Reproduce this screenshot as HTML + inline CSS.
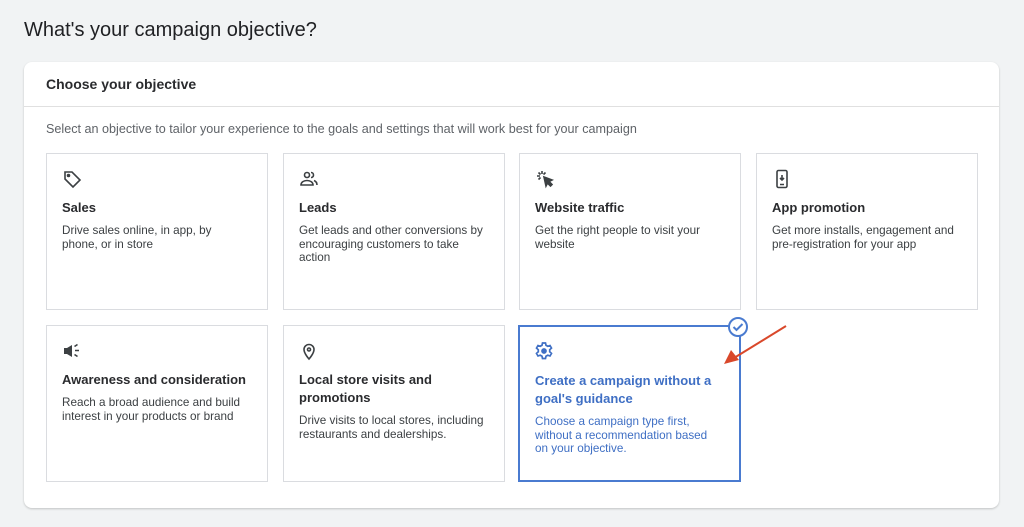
<!DOCTYPE html>
<html><head><style>
body{margin:0;width:1024px;height:527px;background:#f1f3f4;font-family:"Liberation Sans",sans-serif;position:relative;overflow:hidden}
h1{position:absolute;left:24px;top:19px;margin:0;font-size:20px;font-weight:400;color:#202124}
.card{position:absolute;left:24px;top:62px;width:975px;height:446px;background:#fff;border-radius:8px;box-shadow:0 1px 2px rgba(0,0,0,.2)}
.hd{position:absolute;left:22px;top:14px;font-size:14px;font-weight:bold;color:#2a2b2e}
.div{position:absolute;left:0;right:0;top:44px;border-top:1px solid #e0e0e0}
.sub{position:absolute;left:22px;top:60px;font-size:12.6px;color:#5f6368}
.t{position:absolute;width:222px;height:157px;border:1px solid #dadce0;box-sizing:border-box;background:#fff}
.t svg{position:absolute;left:15px;top:15px}
.t .ti{position:absolute;left:15px;top:45px;width:195px;font-size:13px;font-weight:bold;color:#2a2b2e;line-height:18px}
.t .d{position:absolute;left:15px;width:188px;font-size:11.7px;color:#3c4043;line-height:13.5px}
.sel{border:2px solid #4a7bd0}
.sel .ti,.sel .d{color:#3f6fc4}
.sel svg{left:14px;top:14px}
</style></head><body>
<h1>What's your campaign objective?</h1>
<div class="card">
<div class="hd">Choose your objective</div><div class="div"></div>
<div class="sub">Select an objective to tailor your experience to the goals and settings that will work best for your campaign</div>
</div>
<div class="t" style="left:46px;top:153px"><svg width="20" height="20" viewBox="0 0 20 20" fill="none" stroke="#3c4043" stroke-width="1.6"><path d="M3 3h7l8 8-7 7-8-8z"/><circle cx="6.5" cy="6.5" r="1" fill="#3c4043"/></svg><div class="ti">Sales</div><div class="d" style="top:70px">Drive sales online, in app, by phone, or in store</div></div>
<div class="t" style="left:283px;top:153px"><svg width="20" height="20" viewBox="0 0 20 20" fill="none" stroke="#3c4043" stroke-width="1.6"><circle cx="8" cy="6" r="2.5"/><path d="M2 16c0-3 3-4.5 6-4.5s6 1.5 6 4.5z"/><path d="M12 3.5a2.5 2.5 0 010 5M15 11.5c2 .8 3 2 3 4.5"/></svg><div class="ti">Leads</div><div class="d" style="top:70px">Get leads and other conversions by encouraging customers to take action</div></div>
<div class="t" style="left:519px;top:153px"><svg width="20" height="20" viewBox="0 0 20 20" fill="none" stroke="#3c4043" stroke-width="1.6"><path d="M9 8l8 3-3 1.5 3 3-1.5 1.5-3-3L11 17z" fill="#3c4043"/><path d="M7 2v3M2 7h3M3.5 3.5l2 2M10.5 3.5l-2 2M3.5 10.5l2-2"/></svg><div class="ti">Website traffic</div><div class="d" style="top:70px">Get the right people to visit your website</div></div>
<div class="t" style="left:756px;top:153px"><svg width="20" height="20" viewBox="0 0 20 20" fill="none" stroke="#3c4043" stroke-width="1.6"><rect x="5" y="1.5" width="10" height="17" rx="1.5"/><path d="M10 6v5M8 9l2 2 2-2M8 15.5h4"/></svg><div class="ti">App promotion</div><div class="d" style="top:70px">Get more installs, engagement and pre-registration for your app</div></div>
<div class="t" style="left:46px;top:325px"><svg width="20" height="20" viewBox="0 0 20 20" fill="#3c4043"><path d="M2 7h3l5-3v12l-5-3H2z"/><path d="M13 9.5h4M12.5 5.5l3-2M12.5 13.5l3 2" stroke="#3c4043" stroke-width="1.6"/></svg><div class="ti">Awareness and consideration</div><div class="d" style="top:70px">Reach a broad audience and build interest in your products or brand</div></div>
<div class="t" style="left:283px;top:325px"><svg width="20" height="20" viewBox="0 0 20 20" fill="none" stroke="#3c4043" stroke-width="1.6"><path d="M10 18s-5-5.5-5-9.5a5 5 0 0110 0c0 4-5 9.5-5 9.5z"/><circle cx="10" cy="8.5" r="1.5"/></svg><div class="ti">Local store visits and promotions</div><div class="d" style="top:88px">Drive visits to local stores, including restaurants and dealerships.</div></div>
<div class="t sel" style="left:518px;top:325px;width:223px;height:157px"><svg width="20" height="20" viewBox="0 0 20 20" fill="none" stroke="#3f6fc4" stroke-width="1.7"><path d="M8.5 2h3l.5 2.3 1.8 1 2.2-.8 1.5 2.6-1.8 1.6v2.1l1.8 1.6-1.5 2.6-2.2-.8-1.8 1-.5 2.3h-3l-.5-2.3-1.8-1-2.2.8-1.5-2.6 1.8-1.6V8.7L2.5 7.1 4 4.5l2.2.8 1.8-1z"/><circle cx="10" cy="10" r="2" fill="#3f6fc4"/></svg><div class="ti" style="color:#3f6fc4">Create a campaign without a goal's guidance</div><div class="d" style="top:88px">Choose a campaign type first, without a recommendation based on your objective.</div></div>
<svg style="position:absolute;left:727px;top:316px" width="22" height="22" viewBox="0 0 22 22"><circle cx="11" cy="11" r="9" fill="#fff" stroke="#4a7bd0" stroke-width="2"/><path d="M6.5 11l3 3 6-6" fill="none" stroke="#4a7bd0" stroke-width="2"/></svg>
<svg style="position:absolute;left:720px;top:322px" width="70" height="45" viewBox="0 0 70 45"><path d="M66 4L14 36" stroke="#d9482b" stroke-width="2"/><path d="M4 42l7-14 8 10z" fill="#d9482b"/></svg>
</body></html>
